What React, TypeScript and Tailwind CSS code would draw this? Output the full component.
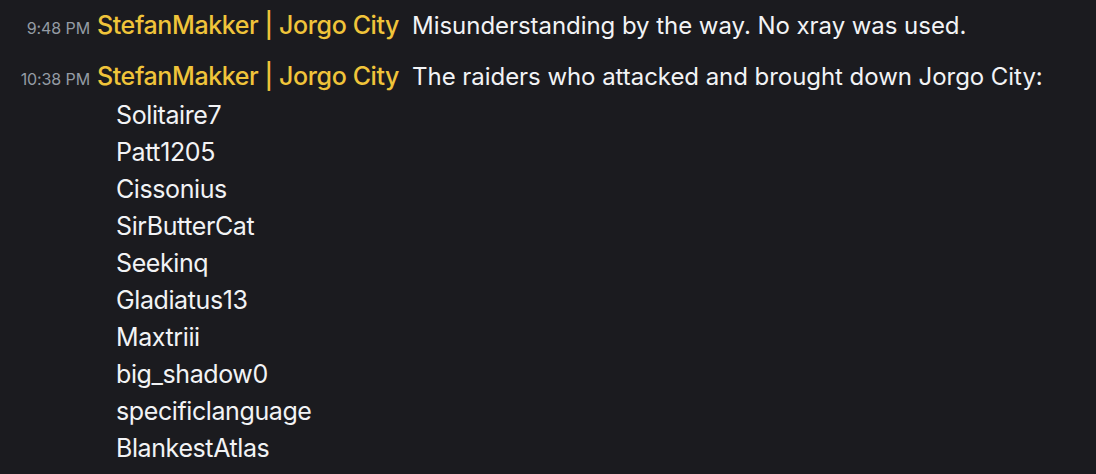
const raiders = [
  "Solitaire7",
  "Patt1205",
  "Cissonius",
  "SirButterCat",
  "Seekinq",
  "Gladiatus13",
  "Maxtriii",
  "big_shadow0",
  "specificlanguage",
  "BlankestAtlas",
]

function Message({ time, children }: { time: string; children: React.ReactNode }) {
  return (
    <div className="flex h-[37px] items-baseline">
      <span className="w-[97px] shrink-0 pr-[7px] text-right text-[16px] tracking-[-0.1px] text-[#949ba4]">{time}</span>
      <span className="text-[25px] font-medium tracking-[-0.4px] text-[#f0c43a]">StefanMakker | Jorgo City</span>
      <span className="ml-[13px] text-[24px] tracking-[-0.05px] text-[#f2f3f5]">{children}</span>
    </div>
  )
}

export default function App() {
  return (
    <div
      className="h-[474px] w-[1096px] overflow-hidden bg-[#1b1b1f] pt-[7px] leading-[37px]"
      style={{ fontFamily: "Inter, 'Noto Sans', sans-serif" }}
    >
      <Message time="9:48 PM">Misunderstanding by the way. No xray was used.</Message>
      <div className="mt-[14px]">
        <Message time="10:38 PM">The raiders who attacked and brought down Jorgo City:</Message>
        <div className="mt-[2px] pl-[116px] text-[25px] tracking-[-0.4px] text-[#f2f3f5]">
          {raiders.map((r) => (
            <div key={r}>{r}</div>
          ))}
        </div>
      </div>
    </div>
  )
}
